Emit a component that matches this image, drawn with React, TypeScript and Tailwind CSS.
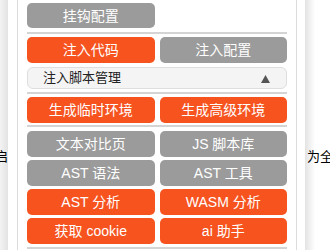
import React from "react";

const ORANGE = "bg-[#f6531f]";
const GRAY = "bg-[#9b9b9b]";

function Btn({ label, hot, h = "h-[26px]" }: { label: string; hot?: boolean; h?: string }) {
  return (
    <button
      type="button"
      className={`${h} w-full rounded-[5px] text-[14px] leading-none text-white ${hot ? ORANGE : GRAY}`}
    >
      {label}
    </button>
  );
}

function Sep({ className = "" }: { className?: string }) {
  return <div className={`h-[2px] w-full bg-[#d4d4d4] ${className}`} />;
}

const tools: { label: string; hot?: boolean }[] = [
  { label: "文本对比页" },
  { label: "JS 脚本库" },
  { label: "AST 语法" },
  { label: "AST 工具" },
  { label: "AST 分析", hot: true },
  { label: "WASM 分析", hot: true },
  { label: "获取 cookie", hot: true },
  { label: "ai 助手", hot: true },
];

export default function App() {
  return (
    <div
      className="relative flex h-[250px] w-[330px] overflow-hidden bg-white text-[13px] text-black"
      style={{ fontFamily: '"Liberation Sans", "Noto Sans CJK SC", sans-serif' }}
    >
      {/* left neighbour edge */}
      <div className="relative w-[17px] shrink-0">
        <div className="h-full w-[8px] bg-linear-to-r from-[#f3f3f3] to-[#e3e3e3]" />
        <span className="absolute top-[150px] right-[9px] whitespace-nowrap leading-none">启</span>
      </div>

      {/* main panel */}
      <div className="flex w-[280px] shrink-0 flex-col border-x border-[#dcdcdc] px-[9px] pt-[3px]">
        <div className="grid grid-cols-2 gap-x-[5px]">
          <Btn label="挂钩配置" h="h-[25px]" />
        </div>
        <Sep className="mt-[4px] mb-[3px]" />
        <div className="grid grid-cols-2 gap-x-[5px]">
          <Btn label="注入代码" hot />
          <Btn label="注入配置" />
        </div>
        <div className="mt-[4px] flex h-[22px] items-center justify-between rounded-[6px] border border-[#dedede] bg-[#f4f4f4] pr-[16px] pl-[15px]">
          <span className="text-[13px] text-[#222]">注入脚本管理</span>
          <svg width="9" height="8" viewBox="0 0 9 8" className="mt-[1px]">
            <path d="M4.5 0 L9 8 L0 8 Z" fill="#555" />
          </svg>
        </div>
        <Sep className="mt-[3px] mb-[3px]" />
        <div className="grid grid-cols-2 gap-x-[5px]">
          <Btn label="生成临时环境" hot />
          <Btn label="生成高级环境" hot />
        </div>
        <Sep className="mt-[2px] mb-[4px]" />
        <div className="grid grid-cols-2 gap-x-[5px] gap-y-[3px]">
          {tools.map((t) => (
            <Btn key={t.label} label={t.label} hot={t.hot} />
          ))}
        </div>
        <Sep className="mt-[3px]" />
      </div>

      {/* right neighbour edge */}
      <div className="relative flex-1">
        <div className="ml-[8px] h-full w-[10px] bg-linear-to-r from-[#e3e3e3] to-white" />
        <span className="absolute top-[150px] left-[10px] whitespace-nowrap leading-none">为全</span>
      </div>
    </div>
  );
}
